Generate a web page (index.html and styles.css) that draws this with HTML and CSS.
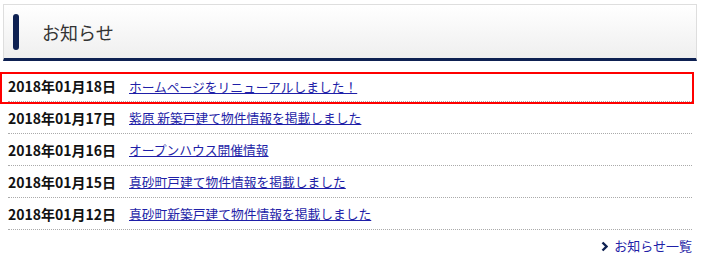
FILE: index.html
```html
<!DOCTYPE html>
<html>

<head>
    <meta charset="utf-8">
    <link rel="stylesheet" href="styles.css">
    <title>お知らせ</title>
</head>

<body>
    <div class="news">
        <h2 class="news-title"><span class="bar"></span>お知らせ</h2>
        <ul class="news-list">
            <li class="news-item highlight"><span class="date">2018年01月18日</span><a href="#">ホームページをリニューアルしました！</a></li>
            <li class="news-item"><span class="date">2018年01月17日</span><a href="#">紫原 新築戸建て物件情報を掲載しました</a></li>
            <li class="news-item"><span class="date">2018年01月16日</span><a href="#">オープンハウス開催情報</a></li>
            <li class="news-item"><span class="date">2018年01月15日</span><a href="#">真砂町戸建て物件情報を掲載しました</a></li>
            <li class="news-item"><span class="date">2018年01月12日</span><a href="#">真砂町新築戸建て物件情報を掲載しました</a></li>
        </ul>
        <p class="more"><a href="#"><svg class="chev" width="7" height="11" viewBox="0 0 7 11"><polyline points="1.5,1.5 5.5,5.5 1.5,9.5" fill="none" stroke="#0e2152" stroke-width="2.4"/></svg>お知らせ一覧</a></p>
    </div>
</body>

</html>
```

FILE: styles.css
```css
body {
    margin: 0;
    background-color: white;
    font-family: "Noto Sans CJK JP", "DejaVu Sans", sans-serif;
}

.news {
    width: 694px;
    margin-left: 3px;
    padding-top: 4px;
}

.news-title {
    display: flex;
    align-items: center;
    height: 53px;
    margin: 0;
    border: 1px solid #dedede;
    border-bottom: 3px solid #0e2152;
    background: linear-gradient(#ffffff, #efefef);
    font-size: 18px;
    font-weight: normal;
    color: #333;
}

.bar {
    width: 6px;
    height: 36px;
    margin-left: 9px;
    margin-right: 23px;
    border-radius: 3px;
    background-color: #0e2152;
}

.news-list {
    list-style: none;
    margin: 10px 0 0 5px;
    padding: 0;
    width: 684px;
}

.news-item {
    display: flex;
    align-items: center;
    height: 31px;
    border-bottom: 1px dotted #aaa;
    font-size: 12.75px;
}

.news-item:first-child {
    height: 30px;
}

.highlight {
    position: relative;
}

/* red marker box drawn over the first row */
.highlight::after {
    content: "";
    position: absolute;
    left: -8px;
    top: 1px;
    right: -2px;
    bottom: -3px;
    border: 2px solid #ff0000;
}

.date {
    width: 121px;
    font-size: 14px;
    font-weight: bold;
    color: #111;
}

.news-item a,
.more a {
    color: #1f1fa8;
}

.more {
    margin: 6px 0 0;
    text-align: right;
    font-size: 13px;
    padding-right: 5px;
}

.more a {
    text-decoration: none;
}

.chev {
    margin-right: 6px;
    vertical-align: -1px;
}
```
